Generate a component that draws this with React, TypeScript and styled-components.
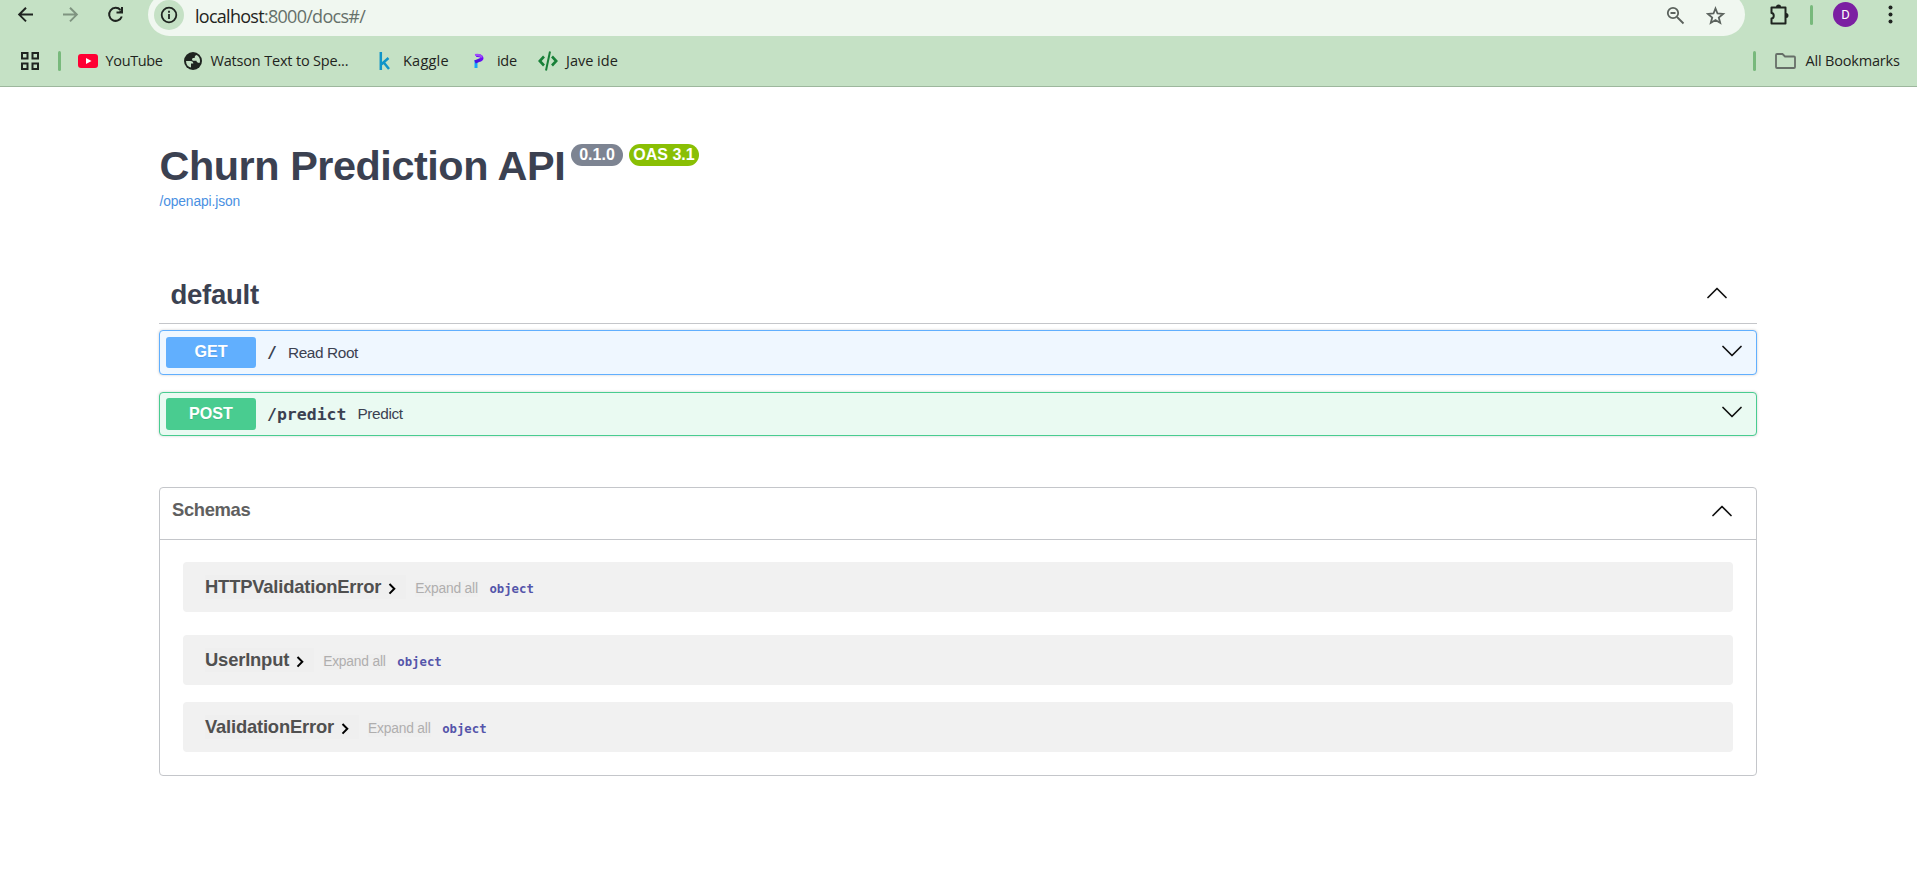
import React from "react";
import styled, { createGlobalStyle } from "styled-components";

const GlobalStyle = createGlobalStyle`
  * { box-sizing: border-box; }
  body { margin: 0; background: #fff; font-family: "Liberation Sans", Arial, sans-serif; color: #3b4151; }
  svg { display: block; flex: none; }
`;

const Browser = styled.header`
  height: 87px;
  background: #c5e1c5;
  border-bottom: 1px solid #9db79d;
  font-family: "Open Sans", "Noto Sans", sans-serif;
  color: #1f2420;
  overflow: hidden;
`;
const NavBar = styled.div`
  display: flex;
  height: 36px;
  padding-left: 16px;
`;
const NavIcons = styled.div`
  display: flex;
  gap: 25px;
  width: 132px;
  padding-top: 5px;
`;
const AddressBar = styled.div`
  display: flex;
  align-items: flex-start;
  width: 1597px;
  height: 43px;
  margin-top: -7px;
  padding: 7px 19px 0 6px;
  border-radius: 21.5px;
  background: #f0f7f0;
`;
const InfoBadge = styled.div`
  display: flex;
  align-items: center;
  justify-content: center;
  width: 30px;
  height: 30px;
  border-radius: 50%;
  background: #c5e1c5;
`;
const Address = styled.div`
  flex: 1;
  margin-left: 11px;
  font-size: 18px;
  line-height: 32px;
  letter-spacing: -0.72px;
  color: #66706a;
  span { color: #1f2420; }
`;
const AddressTools = styled.div`
  display: flex;
  gap: 20px;
  padding-top: 5px;
`;
const ToolArea = styled.div`
  display: flex;
  align-items: flex-start;
  padding: 2px 0 0 23px;
`;
const Avatar = styled.div`
  width: 25px;
  height: 25px;
  margin: 0 27px 0 20px;
  border-radius: 50%;
  background: #7b1fa2;
  color: #fff;
  font: 13px/25px Roboto, sans-serif;
  text-align: center;
`;
const Divider = styled.i<{ $top?: number; $left?: number }>`
  width: 3px;
  height: 20px;
  margin-top: ${(p) => p.$top ?? 0}px;
  margin-left: ${(p) => p.$left ?? 0}px;
  border-radius: 2px;
  background: #78b97c;
`;
const Bookmarks = styled.div`
  display: flex;
  align-items: center;
  height: 50px;
  padding: 0 17px 0 21px;
`;
const Bookmark = styled.div<{ $left: number; $gap: number; $width: number; $spacing?: number }>`
  display: flex;
  align-items: center;
  gap: ${(p) => p.$gap}px;
  width: ${(p) => p.$width}px;
  margin-left: ${(p) => p.$left}px;
  font-size: 14.5px;
  line-height: 20px;
  letter-spacing: ${(p) => p.$spacing ?? -0.3}px;
  white-space: nowrap;
`;
const Spacer = styled.div`
  flex: 1;
`;

const Page = styled.main`
  width: 1598px;
  margin-left: 159px;
`;
const Info = styled.section`
  padding-top: 54px;
  height: 171px;
`;
const TitleRow = styled.div`
  display: flex;
  align-items: flex-start;
`;
const Title = styled.h1`
  width: 412px;
  margin: 0;
  padding-left: 0.5px;
  font-size: 41.4px;
  line-height: 50px;
  letter-spacing: -0.45px;
  white-space: nowrap;
`;
const Version = styled.span<{ $bg: string; $width: number }>`
  width: ${(p) => p.$width}px;
  height: 22px;
  margin: 3px 6px 0 0;
  border-radius: 11px;
  background: ${(p) => p.$bg};
  color: #fff;
  font-size: 16px;
  font-weight: 700;
  line-height: 22px;
  text-align: center;
  white-space: nowrap;
`;
const SpecLink = styled.a`
  display: block;
  margin-top: 3px;
  padding-left: 0.5px;
  font-size: 13.8px;
  line-height: 16px;
  letter-spacing: -0.12px;
  color: #4990e2;
`;
const TagHeader = styled.div`
  display: flex;
  justify-content: space-between;
  height: 66px;
  padding: 20px 30.5px 0 11.5px;
  border-bottom: 1px solid #c4c6ca;
`;
const TagName = styled.h2`
  margin: 0;
  font-size: 27.6px;
  line-height: 34px;
  letter-spacing: -0.3px;
`;
const Operation = styled.div<{ $color: string; $bg: string; $height: number; $gap: number }>`
  display: flex;
  align-items: center;
  height: ${(p) => p.$height}px;
  margin-top: ${(p) => p.$gap}px;
  padding: 0 14px 0 6px;
  border: 1px solid ${(p) => p.$color};
  border-radius: 4px;
  background: ${(p) => p.$bg};
  box-shadow: 0 0 3px rgba(0, 0, 0, 0.19);
`;
const Method = styled.span<{ $color: string; $height: number }>`
  width: 90px;
  height: ${(p) => p.$height}px;
  border-radius: 3px;
  background: ${(p) => p.$color};
  color: #fff;
  font-size: 16.1px;
  font-weight: 700;
  line-height: ${(p) => p.$height - 2}px;
  text-align: center;
  text-shadow: 0 1px 0 rgba(0, 0, 0, 0.1);
`;
const Path = styled.span`
  margin-left: 11px;
  font-family: "DejaVu Sans Mono", monospace;
  font-size: 16.5px;
  font-weight: 700;
`;
const Summary = styled.span`
  flex: 1;
  margin-left: 11px;
  font-size: 15.4px;
  letter-spacing: -0.4px;
`;
const Models = styled.section`
  height: 289px;
  margin-top: 51px;
  border: 1px solid #c4c6ca;
  border-radius: 4px;
`;
const ModelsHeader = styled.div`
  display: flex;
  justify-content: space-between;
  height: 52px;
  padding: 11px 24px 0 12px;
  border-bottom: 1px solid #c4c6ca;
`;
const ModelsTitle = styled.h4`
  margin: 0;
  font-size: 18.4px;
  line-height: 22px;
  letter-spacing: -0.35px;
  color: #606060;
`;
const Model = styled.div<{ $gap: number }>`
  display: flex;
  height: 50px;
  margin: ${(p) => p.$gap}px 23px 0;
  padding: 13px 0 0 22px;
  border-radius: 4px;
  background: #f1f1f1;
`;
const ModelName = styled.button`
  display: flex;
  height: 24px;
  gap: 7px;
  margin: 0 9px 0 0;
  padding: 0 10px 0 0;
  border: 0;
  background: #efefef;
  color: #505050;
  font: 700 18.4px/24px "Liberation Sans", Arial, sans-serif;
  letter-spacing: -0.19px;
  svg { margin-top: 8px; }
`;
const Expand = styled.button`
  height: 16px;
  margin-top: 6px;
  padding: 0;
  border: 0;
  background: #efefef;
  color: #afaeae;
  font: 13.8px/16px "Liberation Sans", Arial, sans-serif;
  letter-spacing: -0.18px;
`;
const Type = styled.span`
  margin: 6px 0 0 11.5px;
  color: #5555aa;
  font: 700 12.3px/17px "DejaVu Sans Mono", monospace;
`;

const ChevronIcon = styled.svg<{ $top: number }>`
  margin-top: ${(p) => p.$top}px;
`;
const Chevron = ({ up, top = 0 }: { up?: boolean; top?: number }) => (
  <ChevronIcon $top={top} width="20" height="12" viewBox="0 0 20 12" fill="none" stroke="#111" strokeWidth="1.7" strokeLinecap="round" strokeLinejoin="round">
    <path d={up ? "M1 10.5 10 1.5l9 9" : "M1 1.5 10 10.5l9-9"} />
  </ChevronIcon>
);

const models = [
  { name: "HTTPValidationError", gap: 22 },
  { name: "UserInput", gap: 23 },
  { name: "ValidationError", gap: 17 },
];

export default function App() {
  return (
    <>
      <GlobalStyle />
      <Browser>
        <NavBar>
          <NavIcons>
            <svg width="20" height="20" viewBox="0 0 20 20" fill="none" stroke="#1f2420" strokeWidth="2"><path d="M17 9.600H3.500M10 2.800 3.200 9.600l6.800 6.800" /></svg>
            <svg width="20" height="20" viewBox="0 0 20 20" fill="none" stroke="#7f9480" strokeWidth="2"><path d="M2 9.600h13.500M9 2.800l6.800 6.800L9 16.400" /></svg>
            <svg width="20" height="20" viewBox="0 0 20 20" fill="none" stroke="#1f2420" strokeWidth="2"><path d="M14.500 5A6.500 6.500 0 1 0 15.800 11.500M16 2v5.500h-5.500" /><path d="M16.500 3.500v4.500h-4.500z" fill="#1f2420" stroke="none" /></svg>
          </NavIcons>
          <AddressBar>
            <InfoBadge>
              <svg width="18" height="18" viewBox="0 0 18 18" fill="none" stroke="#1f2420" strokeWidth="1.800"><circle cx="9" cy="9" r="7.300" /><path d="M9 8v5M9 4.800v2" /></svg>
            </InfoBadge>
            <Address><span>localhost</span>:8000/docs#/</Address>
            <AddressTools>
              <svg width="20" height="20" viewBox="0 0 20 20" fill="none" stroke="#5b625d" strokeWidth="1.800"><circle cx="7" cy="8" r="5.200" /><path d="m11 12 6.500 6.500M4.500 8h5" /></svg>
              <svg width="20" height="20" viewBox="0 0 20 20" fill="none" stroke="#5b625d" strokeWidth="1.800"><path d="m9.500 3.500 2 5 5.600.4-4.300 3.600 1.400 5.400L9.500 15l-4.700 2.900 1.400-5.400-4.300-3.600 5.600-.4z" /></svg>
            </AddressTools>
          </AddressBar>
          <ToolArea>
            <svg width="24" height="24" viewBox="0 0 24 24" fill="none" stroke="#1f2420" strokeWidth="2"><path d="M3.500 5.500h14v16h-14v-5c3-.3 3-5.200 0-5.500z" strokeLinejoin="round" /><path d="M8 5a2.500 2.500 0 0 1 5 0zM18 11a2.500 2.500 0 0 1 0 5z" fill="#1f2420" stroke="none" /></svg>
            <Divider $top={3} $left={18} />
            <Avatar>D</Avatar>
            <svg width="12" height="24" viewBox="0 0 12 24" fill="#1f2420"><circle cx="5.500" cy="5.500" r="2" /><circle cx="5.500" cy="12.500" r="2" /><circle cx="5.500" cy="19.500" r="2" /></svg>
          </ToolArea>
        </NavBar>
        <Bookmarks>
          <svg width="18" height="18" viewBox="0 0 18 18" fill="none" stroke="#1f2420" strokeWidth="2"><path d="M1 1h5.500v5.500H1zM11.500 1H17v5.500h-5.500zM1 11.500h5.500V17H1zM11.500 11.500H17V17h-5.500z" /></svg>
          <Divider $left={19} />
          <Bookmark $left={17} $gap={7.5} $width={106} $spacing={-0.35}>
            <svg width="20" height="14" viewBox="0 0 20 14"><rect width="20" height="14" rx="3" fill="#f03" /><path d="m8 4 5.500 3L8 10z" fill="#fff" /></svg>
            YouTube
          </Bookmark>
          <Bookmark $left={0} $gap={8.5} $width={193} $spacing={-0.18}>
            <svg width="18" height="18" viewBox="0 0 18 18"><circle cx="9" cy="9" r="9" fill="#1f2420" /><path d="M2 9h4.500c2 0 2.800 1.200 2.800 2.600H7v4C4 15 2 12.500 2 9zM12.500 3c2.300 1 3.800 3.500 3.500 6.500l-.5 1.500c-2-.2-3-.8-3-2.200H9.500c-1.800 0-2-2.800 0-2.800h1.200c0-1.600.3-2.500 1.800-3z" fill="#c5e1c5" /></svg>
            Watson Text to Spe...
          </Bookmark>
          <Bookmark $left={2} $gap={13} $width={92} $spacing={0.22}>
            <svg width="11" height="18" viewBox="0 0 11 18" fill="none" stroke="#1094c8" strokeWidth="2.500"><path d="M1.800 0v18M9.500 6 2.500 12.200M4.800 10.500l5.200 6.500" /></svg>
            Kaggle
          </Bookmark>
          <Bookmark $left={2} $gap={13} $width={65} $spacing={-0.3}>
            <svg width="11" height="16" viewBox="0 0 11 16" fill="none" strokeWidth="3"><path d="M3 7v8" stroke="#14a5fb" /><path d="M2 9 8 6.500" stroke="#4a10e0" strokeWidth="3.500" /><path d="M3 2.500c3-.5 6 .8 6 2.500 0 1-1 1.800-2 2" stroke="#6a0cf5" /><path d="M2 2c3-.5 6 .5 7 2.500" stroke="#9f4af8" strokeWidth="2.200" /></svg>
            ide
          </Bookmark>
          <Bookmark $left={0} $gap={8} $width={90} $spacing={0}>
            <svg width="20" height="20" viewBox="0 0 20 20" fill="none" stroke="#188038" strokeWidth="2.600"><path d="M6 5.500 1.800 10 6 14.500M14 5.500l4.200 4.500-4.200 4.500" /><path d="M12 .5 8 19.500" strokeWidth="2" /></svg>
            Jave ide
          </Bookmark>
          <Spacer />
          <Divider />
          <Bookmark $left={19} $gap={9.5} $width={125} $spacing={-0.18}>
            <svg width="21" height="16" viewBox="0 0 21 16" fill="none" stroke="#666f68" strokeWidth="1.800"><path d="M2 1h5.500l2.500 2.500h9q1 0 1 1V14q0 1-1 1H2q-1 0-1-1V2q0-1 1-1z" /></svg>
            All Bookmarks
          </Bookmark>
        </Bookmarks>
      </Browser>
      <Page>
        <Info>
          <TitleRow>
            <Title>Churn Prediction API</Title>
            <Version $bg="#7d8492" $width={52}>0.1.0</Version>
            <Version $bg="#89bf04" $width={70}>OAS 3.1</Version>
          </TitleRow>
          <SpecLink>/openapi.json</SpecLink>
        </Info>
        <TagHeader>
          <TagName>default</TagName>
          <Chevron up top={9} />
        </TagHeader>
        <Operation $color="#61affe" $bg="#eff7ff" $height={45} $gap={6}>
          <Method $color="#61affe" $height={31}>GET</Method>
          <Path>/</Path>
          <Summary>Read Root</Summary>
          <Chevron top={-4} />
        </Operation>
        <Operation $color="#49cc90" $bg="#eafaf2" $height={44} $gap={17}>
          <Method $color="#49cc90" $height={32}>POST</Method>
          <Path>/predict</Path>
          <Summary>Predict</Summary>
          <Chevron top={-4} />
        </Operation>
        <Models>
          <ModelsHeader>
            <ModelsTitle>Schemas</ModelsTitle>
            <Chevron up top={6} />
          </ModelsHeader>
          {models.map((m) => (
            <Model key={m.name} $gap={m.gap}>
              <ModelName>
                {m.name}
                <svg width="8" height="12" viewBox="0 0 8 12" fill="none" stroke="#000" strokeWidth="2"><path d="M1.500 1 6.300 5.800 1.500 10.600" /></svg>
              </ModelName>
              <Expand>Expand all</Expand>
              <Type>object</Type>
            </Model>
          ))}
        </Models>
      </Page>
    </>
  );
}
